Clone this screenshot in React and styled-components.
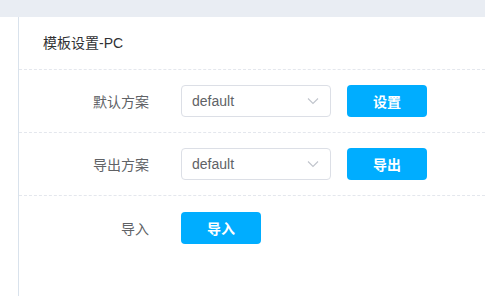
import React from "react";
import styled, { createGlobalStyle } from "styled-components";

const Global = createGlobalStyle`
  html, body { margin: 0; padding: 0; background: #fff; }
  body { font-family: "Liberation Sans", "Noto Sans CJK SC", sans-serif; }
  * { box-sizing: border-box; }
`;

const Page = styled.div`
  width: 485px;
  height: 296px;
  display: flex;
  flex-direction: column;
  overflow: hidden;
  background: #fff;
`;

const TopBar = styled.div`
  height: 17px;
  background: #e9edf3;
  flex: none;
`;

const Body = styled.div`
  flex: 1;
  display: flex;
  padding-left: 18px;
`;

const Panel = styled.div`
  flex: 1;
  border-left: 1px solid #d9e2ec;
  display: flex;
  flex-direction: column;
`;

const Title = styled.div`
  height: 53px;
  line-height: 52px;
  padding-left: 24px;
  font-size: 14px;
  color: #303133;
  border-bottom: 1px dashed #e4e7ed;
`;

const Row = styled.div`
  display: flex;
  align-items: center;
  height: 63px;
  padding: 15px 0;
  border-bottom: ${(p) => (p.$last ? "none" : "1px dashed #e4e7ed")};
`;

const Label = styled.div`
  width: 130px;
  margin-right: 32px;
  flex: none;
  text-align: right;
  font-size: 14px;
  color: #606266;
`;

const Select = styled.div`
  width: 150px;
  height: 32px;
  border: 1px solid #dcdfe6;
  border-radius: 4px;
  display: flex;
  align-items: center;
  justify-content: space-between;
  padding: 0 11px 0 10px;
  font-size: 14px;
  color: #606266;
  margin-right: 16px;
`;

const Button = styled.button`
  width: 80px;
  height: 32px;
  border: none;
  border-radius: 4px;
  background: #00adff;
  color: #fff;
  font-size: 14px;
  font-family: inherit;
  font-weight: 600;
  padding: 0;
`;

const Chevron = () => (
  <svg width="12" height="8" viewBox="0 0 12 8">
    <path d="M1 1.5 L6 6.5 L11 1.5" fill="none" stroke="#c0c4cc" strokeWidth="1.1" />
  </svg>
);

export default function App() {
  return (
    <Page>
      <Global />
      <TopBar />
      <Body>
        <Panel>
          <Title>模板设置-PC</Title>
          <Row>
            <Label>默认方案</Label>
            <Select>
              <span>default</span>
              <Chevron />
            </Select>
            <Button>设置</Button>
          </Row>
          <Row>
            <Label>导出方案</Label>
            <Select>
              <span>default</span>
              <Chevron />
            </Select>
            <Button>导出</Button>
          </Row>
          <Row $last>
            <Label>导入</Label>
            <Button>导入</Button>
          </Row>
        </Panel>
      </Body>
    </Page>
  );
}
